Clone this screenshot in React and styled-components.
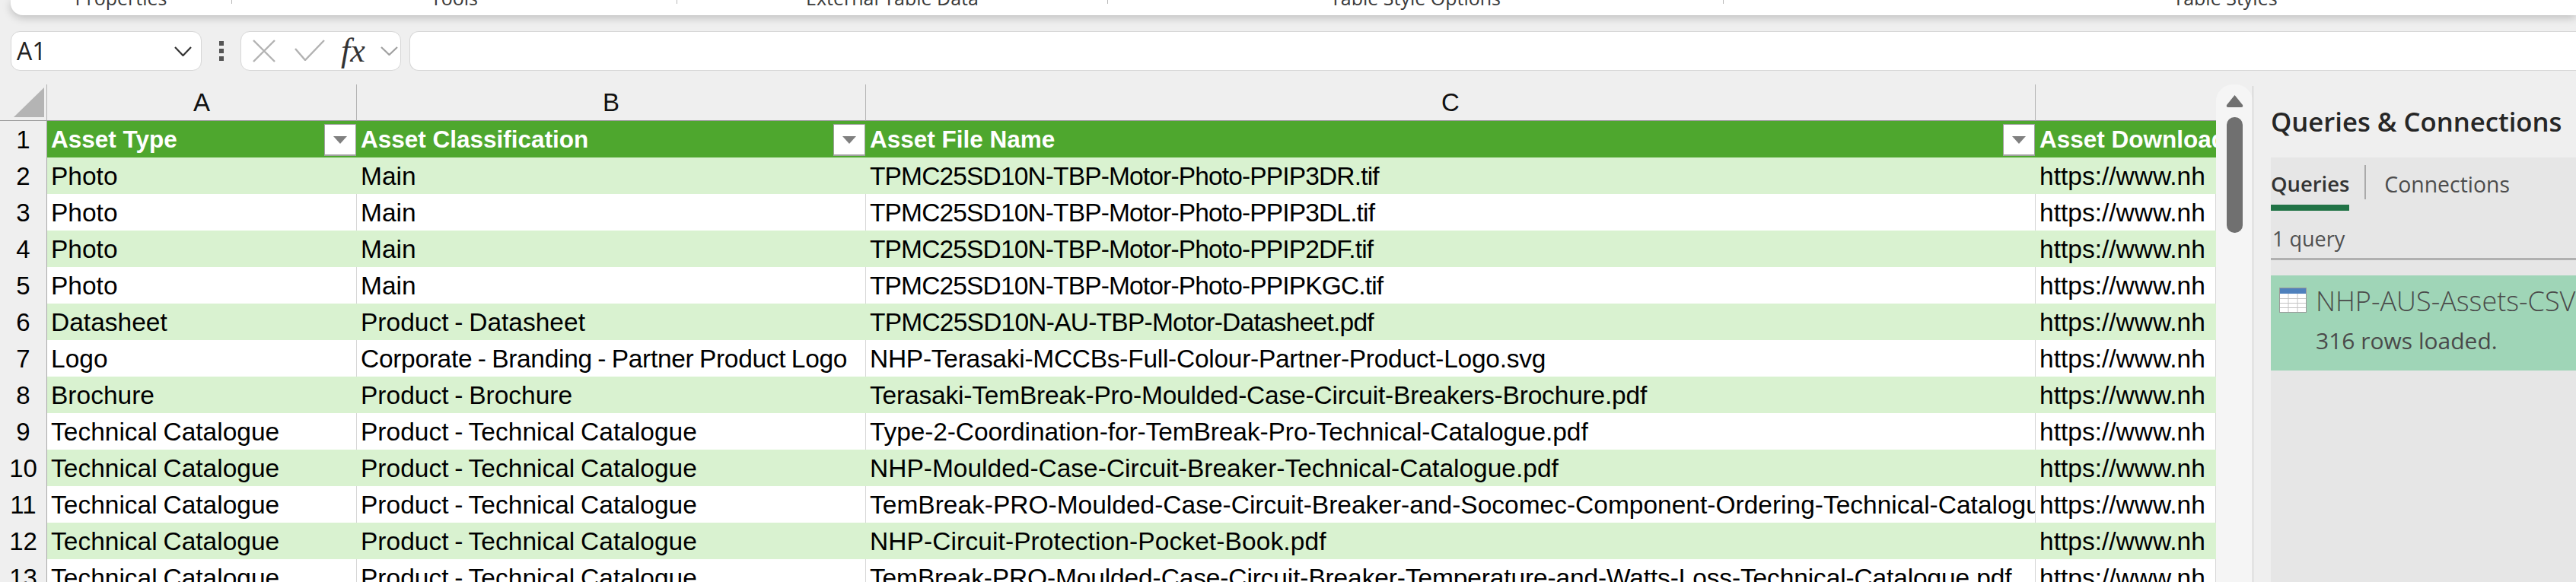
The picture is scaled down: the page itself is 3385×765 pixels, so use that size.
import React from "react";
import styled, { createGlobalStyle } from "styled-components";

const Global = createGlobalStyle`
  html, body { margin: 0; padding: 0; background: #efefef; overflow: hidden; }
  * { box-sizing: border-box; }
`;

const Page = styled.div`
  width: 3385px;
  height: 765px;
  overflow: hidden;
  background: #efefef;
  display: flex;
  flex-direction: column;
  font-family: "Liberation Sans", Arial, sans-serif;
`;

/* Ribbon */
const Ribbon = styled.div`
  height: 20px;
  margin-left: 14px;
  flex: none;
  display: flex;
  background: #fff;
  border-bottom-left-radius: 16px;
  box-shadow: 0 3px 12px rgba(0, 0, 0, 0.22);
`;
const RibbonClip = styled.div`
  display: flex;
  height: 20px;
  overflow: hidden;
  width: 100%;
  border-bottom-left-radius: 16px;
`;
const Group = styled.div`
  flex: none;
  width: ${(p) => p.$w}px;
  display: flex;
  align-items: flex-start;
  justify-content: center;
`;
const GroupLabel = styled.span`
  font-family: "Open Sans", sans-serif;
  font-size: 25px;
  line-height: 32px;
  margin-top: -19px;
  color: #3a3a3a;
  white-space: nowrap;
`;
const GroupDivider = styled.i`
  flex: none;
  width: 1px;
  height: 5px;
  background: #b8b8b8;
`;

/* Formula bar */
const FormulaBar = styled.div`
  flex: none;
  height: 52px;
  margin: 21px 0 18px 14px;
  display: flex;
  align-items: stretch;
`;
const Field = styled.div`
  background: #fff;
  border: 1px solid #d6d6d6;
  border-radius: 12px;
  display: flex;
  align-items: center;
`;
const NameBox = styled(Field)`
  width: 251px;
  padding: 0 12px 0 7px;
  justify-content: space-between;
`;
const CellRef = styled.span`
  font-family: "Open Sans", sans-serif;
  font-size: 32px;
  color: #222;
  line-height: 50px;
`;
const Grip = styled.div`
  flex: none;
  width: 51px;
  display: flex;
  flex-direction: column;
  align-items: center;
  justify-content: center;
  gap: 4px;
`;
const GripDot = styled.i`
  width: 6px;
  height: 6px;
  background: #555;
`;
const FxBox = styled(Field)`
  width: 211px;
  padding-left: 15px;
`;
const FxLabel = styled.span`
  font-family: "Liberation Serif", serif;
  font-style: italic;
  font-weight: 400;
  font-size: 44px;
  line-height: 44px;
  color: #333;
  width: 38px;
  margin: 0 14px 0 21px;
  white-space: nowrap;
`;
const FormulaInput = styled(Field)`
  flex: 1;
  margin-left: 11px;
  border-right: 0;
  border-radius: 12px 0 0 12px;
`;

/* Main */
const Main = styled.div`
  flex: 1;
  min-height: 0;
  display: flex;
`;
const Sheet = styled.div`
  width: 2912px;
  flex: none;
  overflow: hidden;
`;
const Row = styled.div`
  display: grid;
  grid-template-columns: 62px 407px 669px 1537px 237px;
  height: 48px;
`;
const Corner = styled.div`
  border-right: 1px solid #b0b0b0;
  border-bottom: 1px solid #9a9a9a;
  display: flex;
  align-items: flex-start;
  justify-content: flex-end;
  padding: 4px 3px 0 0;
`;
const ColHead = styled.div`
  border-right: 1px solid #b4b4b4;
  border-bottom: 1px solid #9a9a9a;
  text-align: center;
  font-size: 33px;
  line-height: 47px;
  color: #111;
`;
const ColHeadEnd = styled.div`
  border-bottom: 1px solid #9a9a9a;
`;
const RowHead = styled.div`
  background: #efefef;
  border-right: 1px solid #a8a8a8;
  border-bottom: 1px solid #b0b0b0;
  text-align: center;
  font-size: 33px;
  line-height: 49px;
  color: #000;
`;
const Cell = styled.div`
  background: ${(p) => (p.$band ? "#d9f2d0" : "#fff")};
  border-bottom: 1px solid #8ed973;
  border-right: 1px solid ${(p) => (p.$band ? "#d9f2d0" : "#d6d6d6")};
  padding-left: 5px;
  font-size: 33.5px;
  word-spacing: -1.5px;
  letter-spacing: ${(p) => p.$track || 0}px;
  line-height: 49px;
  color: #000;
  white-space: nowrap;
  overflow: hidden;
`;
const HeadCell = styled.div`
  background: #4ea72e;
  border-bottom: 1px solid #8ed973;
  padding-left: 5px;
  font-size: 31.5px;
  font-weight: 700;
  line-height: 49px;
  color: #fff;
  white-space: nowrap;
  overflow: hidden;
  display: flex;
  justify-content: space-between;
  align-items: flex-start;
`;
const FilterButton = styled.div`
  flex: none;
  width: 42px;
  height: 42px;
  margin: 4px 1px 0 0;
  background: #fff;
  border: 1px solid #a0a0a0;
  border-bottom-width: 2px;
  display: flex;
  align-items: center;
  justify-content: center;
`;

/* Scrollbar */
const Scrollbar = styled.div`
  flex: none;
  width: 48px;
  padding: 13px 13px 0 14px;
  background: #f5f5f5;
  border-radius: 22px 22px 0 0;
  display: flex;
  flex-direction: column;
  align-items: center;
`;
const Thumb = styled.div`
  flex: none;
  width: 21px;
  height: 152px;
  margin-top: 13px;
  border-radius: 10px;
  background: #707070;
`;

/* Panel */
const Panel = styled.div`
  flex: 1;
  min-width: 0;
  margin-top: 2px;
  padding-left: 23px;
  border-left: 1px solid #c8c8c8;
  display: flex;
  flex-direction: column;
  font-family: "Open Sans", sans-serif;
  overflow: hidden;
`;
const PanelTitle = styled.div`
  flex: none;
  height: 94px;
  font-size: 34.7px;
  font-weight: 600;
  line-height: 94px;
  color: #262626;
  white-space: nowrap;
`;
const PanelBody = styled.div`
  flex: 1;
  background: #e6e6e6;
  display: flex;
  flex-direction: column;
  min-width: 442px;
`;
const Tabs = styled.div`
  flex: none;
  height: 70px;
  display: flex;
  align-items: flex-start;
  padding-top: 10px;
`;
const Tab = styled.div`
  flex: none;
  height: 60px;
  font-size: ${(p) => (p.$active ? 27.4 : 28.4)}px;
  font-weight: ${(p) => (p.$active ? 600 : 400)};
  color: ${(p) => (p.$active ? "#333" : "#4c4c4c")};
  line-height: 50px;
  border-bottom: ${(p) => (p.$active ? "8px solid #217346" : "0")};
  white-space: nowrap;
`;
const TabDivider = styled.i`
  flex: none;
  width: 2px;
  height: 45px;
  margin: 0 24px 0 20px;
  background: #aaa;
`;
const Count = styled.div`
  flex: none;
  height: 65px;
  padding-left: 2px;
  border-bottom: 3px solid #b0b0b0;
  font-size: 27px;
  line-height: 74px;
  color: #505050;
`;
const QueryCard = styled.div`
  flex: none;
  height: 125px;
  margin-top: 20px;
  background: #9fd5b7;
  padding: 16px 0 0 11px;
  display: grid;
  grid-template-columns: 48px 1fr;
  grid-template-rows: 46px auto;
  overflow: hidden;
`;
const QueryName = styled.div`
  font-size: 36px;
  font-weight: 300;
  line-height: 36px;
  color: #4a4a4a;
  white-space: nowrap;
`;
const QueryInfo = styled.div`
  grid-column: 2;
  font-size: 30px;
  line-height: 48px;
  color: #4a4a4a;
  white-space: nowrap;
`;

const Chevron = ({ w, h, color, sw }) => (
  <svg width={w} height={h} viewBox={`0 0 ${w} ${h}`} fill="none">
    <path d={`M1 1 L${w / 2} ${h - 1} L${w - 1} 1`} stroke={color} strokeWidth={sw} />
  </svg>
);

const CancelIcon = () => (
  <svg width="30" height="30" viewBox="0 0 30 30" fill="none">
    <path d="M1 1 L29 29 M29 1 L1 29" stroke="#b2b2b2" strokeWidth="2.4" />
  </svg>
);

const CheckIcon = () => (
  <svg width="40" height="28" viewBox="0 0 40 28" fill="none" style={{ marginLeft: 25, marginTop: -3 }}>
    <path d="M1 12 L14 27 L39 1" stroke="#b2b2b2" strokeWidth="2.4" />
  </svg>
);

const CornerTriangle = () => (
  <svg width="40" height="39" viewBox="0 0 40 39">
    <path d="M40 0 V39 H0 Z" fill="#b4b4b4" />
  </svg>
);

const FilterArrow = () => (
  <svg width="18" height="10" viewBox="0 0 18 10">
    <path d="M0 0 H18 L9 10 Z" fill="#808080" />
  </svg>
);

const ScrollUp = () => (
  <svg width="23" height="17" viewBox="0 0 23 17">
    <path d="M11.5 1 L22 14 Q23 17 20 17 H3 Q0 17 1 14 Z" fill="#707070" />
  </svg>
);

const TableIcon = () => (
  <svg width="36" height="33" viewBox="0 0 36 33">
    <rect x="0.5" y="0.5" width="35" height="32" fill="#fff" stroke="#9a9a9a" />
    <rect x="1" y="1" width="34" height="7" fill="#4f81bd" />
    <path d="M12 8 V32 M24 8 V32 M1 14.5 H35 M1 20.5 H35 M1 26.5 H35" stroke="#c4c4c4" strokeWidth="1" />
  </svg>
);

const groups = [
  ["Properties", 290],
  ["Tools", 584],
  ["External Table Data", 565],
  ["Table Style Options", 808],
  ["Table Styles", 1318],
];

const rows = [
  ["Photo", "Main", "TPMC25SD10N-TBP-Motor-Photo-PPIP3DR.tif", -0.85],
  ["Photo", "Main", "TPMC25SD10N-TBP-Motor-Photo-PPIP3DL.tif", -0.85],
  ["Photo", "Main", "TPMC25SD10N-TBP-Motor-Photo-PPIP2DF.tif", -0.85],
  ["Photo", "Main", "TPMC25SD10N-TBP-Motor-Photo-PPIPKGC.tif", -0.85],
  ["Datasheet", "Product - Datasheet", "TPMC25SD10N-AU-TBP-Motor-Datasheet.pdf", -0.76],
  ["Logo", "Corporate - Branding - Partner Product Logo", "NHP-Terasaki-MCCBs-Full-Colour-Partner-Product-Logo.svg", -0.27, -0.3],
  ["Brochure", "Product - Brochure", "Terasaki-TemBreak-Pro-Moulded-Case-Circuit-Breakers-Brochure.pdf", -0.19],
  ["Technical Catalogue", "Product - Technical Catalogue", "Type-2-Coordination-for-TemBreak-Pro-Technical-Catalogue.pdf", -0.1],
  ["Technical Catalogue", "Product - Technical Catalogue", "NHP-Moulded-Case-Circuit-Breaker-Technical-Catalogue.pdf", 0],
  ["Technical Catalogue", "Product - Technical Catalogue", "TemBreak-PRO-Moulded-Case-Circuit-Breaker-and-Socomec-Component-Ordering-Technical-Catalogue.pdf", 0],
  ["Technical Catalogue", "Product - Technical Catalogue", "NHP-Circuit-Protection-Pocket-Book.pdf", 0.1],
  ["Technical Catalogue", "Product - Technical Catalogue", "TemBreak-PRO-Moulded-Case-Circuit-Breaker-Temperature-and-Watts-Loss-Technical-Catalogue.pdf", -0.13],
];

const headers = ["Asset Type", "Asset Classification", "Asset File Name"];

export default function App() {
  return (
    <Page>
      <Global />
      <Ribbon>
        <RibbonClip>
          {groups.map(([label, w], i) => (
            <React.Fragment key={label}>
              <Group $w={w}>
                <GroupLabel>{label}</GroupLabel>
              </Group>
              {i < groups.length - 1 && <GroupDivider />}
            </React.Fragment>
          ))}
        </RibbonClip>
      </Ribbon>

      <FormulaBar>
        <NameBox>
          <CellRef>A1</CellRef>
          <Chevron w={23} h={13} color="#333" sw={2.2} />
        </NameBox>
        <Grip>
          <GripDot />
          <GripDot />
          <GripDot />
        </Grip>
        <FxBox>
          <CancelIcon />
          <CheckIcon />
          <FxLabel>fx</FxLabel>
          <Chevron w={23} h={12} color="#a0a0a0" sw={2.2} />
        </FxBox>
        <FormulaInput />
      </FormulaBar>

      <Main>
        <Sheet>
          <Row>
            <Corner>
              <CornerTriangle />
            </Corner>
            <ColHead>A</ColHead>
            <ColHead>B</ColHead>
            <ColHead>C</ColHead>
            <ColHeadEnd />
          </Row>
          <Row>
            <RowHead>1</RowHead>
            {headers.map((h) => (
              <HeadCell key={h}>
                <span>{h}</span>
                <FilterButton>
                  <FilterArrow />
                </FilterButton>
              </HeadCell>
            ))}
            <HeadCell>
              <span>Asset Download URL</span>
            </HeadCell>
          </Row>
          {rows.map(([type, cls, file, track, clsTrack], i) => {
            const band = i % 2 === 0;
            return (
              <Row key={i}>
                <RowHead>{i + 2}</RowHead>
                <Cell $band={band}>{type}</Cell>
                <Cell $band={band} $track={clsTrack}>
                  {cls}
                </Cell>
                <Cell $band={band} $track={track}>
                  {file}
                </Cell>
                <Cell $band={band}>https://www.nh</Cell>
              </Row>
            );
          })}
        </Sheet>

        <Scrollbar>
          <ScrollUp />
          <Thumb />
        </Scrollbar>

        <Panel>
          <PanelTitle>Queries &amp; Connections</PanelTitle>
          <PanelBody>
            <Tabs>
              <Tab $active>Queries</Tab>
              <TabDivider />
              <Tab>Connections</Tab>
            </Tabs>
            <Count>1 query</Count>
            <QueryCard>
              <TableIcon />
              <QueryName>NHP-AUS-Assets-CSV</QueryName>
              <QueryInfo>316 rows loaded.</QueryInfo>
            </QueryCard>
          </PanelBody>
        </Panel>
      </Main>
    </Page>
  );
}
